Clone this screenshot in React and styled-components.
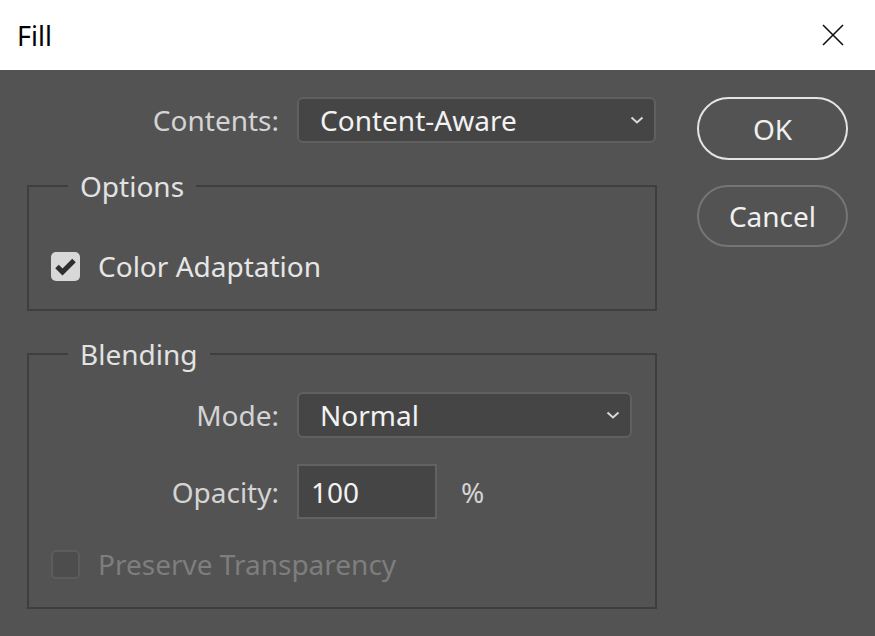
import React from 'react';
import styled, { createGlobalStyle } from 'styled-components';

const GlobalStyle = createGlobalStyle`
  html, body {
    margin: 0;
    padding: 0;
    background: #535353;
  }
  body {
    font-family: "Noto Sans", "Open Sans", sans-serif;
  }
`;

const Window = styled.div`
  width: 875px;
  height: 636px;
  display: flex;
  flex-direction: column;
  background: #535353;
  overflow: hidden;
`;

const TitleBar = styled.div`
  height: 70px;
  flex: none;
  background: #ffffff;
  display: flex;
  align-items: center;
  justify-content: space-between;
  padding: 0 30px 0 17px;
`;

const Title = styled.span`
  font-size: 27px;
  color: #000;
`;

const CloseButton = styled.button`
  border: 0;
  background: none;
  padding: 0;
  width: 24px;
  height: 24px;
  display: flex;
  align-items: center;
  justify-content: center;
`;

const Body = styled.div`
  flex: 1;
  display: flex;
  gap: 40px;
  padding: 27px 27px 0 27px;
`;

const Main = styled.div`
  width: 630px;
  display: flex;
  flex-direction: column;
`;

const Side = styled.div`
  width: 151px;
  display: flex;
  flex-direction: column;
  gap: 25px;
`;

const Row = styled.div`
  display: flex;
  align-items: center;
  gap: ${(p) => p.gap || 18}px;
  margin-top: ${(p) => p.top || 0}px;
`;

const Label = styled.label`
  width: ${(p) => p.width}px;
  text-align: right;
  font-size: 28px;
  color: #d4d4d4;
  flex: none;
`;

const SelectBox = styled.div`
  width: ${(p) => p.width}px;
  height: 46px;
  box-sizing: border-box;
  border: 2px solid #606060;
  border-radius: 6px;
  background: #454545;
  display: flex;
  align-items: center;
  justify-content: space-between;
  padding: 0 10px 0 21px;
  font-size: 28px;
  color: #f2f2f2;
`;

const NumberBox = styled.div`
  width: 140px;
  height: 55px;
  box-sizing: border-box;
  border: 2px solid #626262;
  background: #454545;
  display: flex;
  align-items: center;
  padding-left: 12px;
  font-size: 28px;
  color: #f2f2f2;
`;

const Unit = styled.span`
  margin-left: 6px;
  font-size: 28px;
  color: #d4d4d4;
`;

const Group = styled.fieldset`
  margin: ${(p) => p.top}px 0 0 0;
  padding: ${(p) => p.pad};
  border: 2px solid #3e3e3e;
  min-width: 0;
`;

const Legend = styled.legend`
  margin-left: 17px;
  padding: 0 12px;
  font-size: 28px;
  line-height: 36px;
  color: #e2e2e2;
`;

const CheckRow = styled.div`
  display: flex;
  align-items: center;
  gap: 18px;
  height: 36px;
  margin-top: ${(p) => p.top || 0}px;
  font-size: 28px;
  color: ${(p) => (p.disabled ? '#7e7e7e' : '#e6e6e6')};
`;

const Box = styled.span`
  width: 29px;
  height: 29px;
  box-sizing: border-box;
  border-radius: 5px;
  flex: none;
  display: flex;
  align-items: center;
  justify-content: center;
  background: ${(p) => (p.checked ? '#d8d8d8' : '#4d4d4d')};
  border: ${(p) => (p.checked ? 'none' : '2px solid #5c5c5c')};
`;

const PillButton = styled.button`
  width: 151px;
  height: ${(p) => p.height}px;
  border-radius: 32px;
  border: 2px solid ${(p) => (p.primary ? '#e4e4e4' : '#757575')};
  background: transparent;
  color: #f0f0f0;
  font-family: inherit;
  font-size: 28px;
  padding: 0;
`;

const Chevron = () => (
  <svg width="14" height="9" viewBox="0 0 14 9">
    <polyline points="1.5,1.5 7,6.5 12.5,1.5" fill="none" stroke="#d8d8d8" strokeWidth="2" />
  </svg>
);

const CheckMark = () => (
  <svg width="23" height="19" viewBox="0 0 23 19">
    <polyline points="3,9.5 8.5,15 20,3.5" fill="none" stroke="#2e2e2e" strokeWidth="5" />
  </svg>
);

const CloseIcon = () => (
  <svg width="22" height="22" viewBox="0 0 22 22">
    <path d="M1 1 L21 21 M21 1 L1 21" stroke="#111" strokeWidth="1.6" />
  </svg>
);

const Checkbox = ({ checked, disabled, label, top }) => (
  <CheckRow disabled={disabled} top={top}>
    <Box checked={checked}>{checked && <CheckMark />}</Box>
    <span>{label}</span>
  </CheckRow>
);

export default function App() {
  return (
    <Window>
      <GlobalStyle />
      <TitleBar>
        <Title>Fill</Title>
        <CloseButton>
          <CloseIcon />
        </CloseButton>
      </TitleBar>
      <Body>
        <Main>
          <Row>
            <Label width={252}>Contents:</Label>
            <SelectBox width={359}>
              <span>Content-Aware</span>
              <Chevron />
            </SelectBox>
          </Row>

          <Group top={25} pad="44px 22px 25px 22px">
            <Legend>Options</Legend>
            <Checkbox checked label="Color Adaptation" />
          </Group>

          <Group top={25} pad="20px 22px 25px 22px">
            <Legend>Blending</Legend>
            <Row>
              <Label width={228}>Mode:</Label>
              <SelectBox width={335}>
                <span>Normal</span>
                <Chevron />
              </SelectBox>
            </Row>
            <Row top={26}>
              <Label width={228}>Opacity:</Label>
              <NumberBox>100</NumberBox>
              <Unit>%</Unit>
            </Row>
            <Checkbox disabled label="Preserve Transparency" top={27} />
          </Group>
        </Main>
        <Side>
          <PillButton primary height={63}>OK</PillButton>
          <PillButton height={62}>Cancel</PillButton>
        </Side>
      </Body>
    </Window>
  );
}
